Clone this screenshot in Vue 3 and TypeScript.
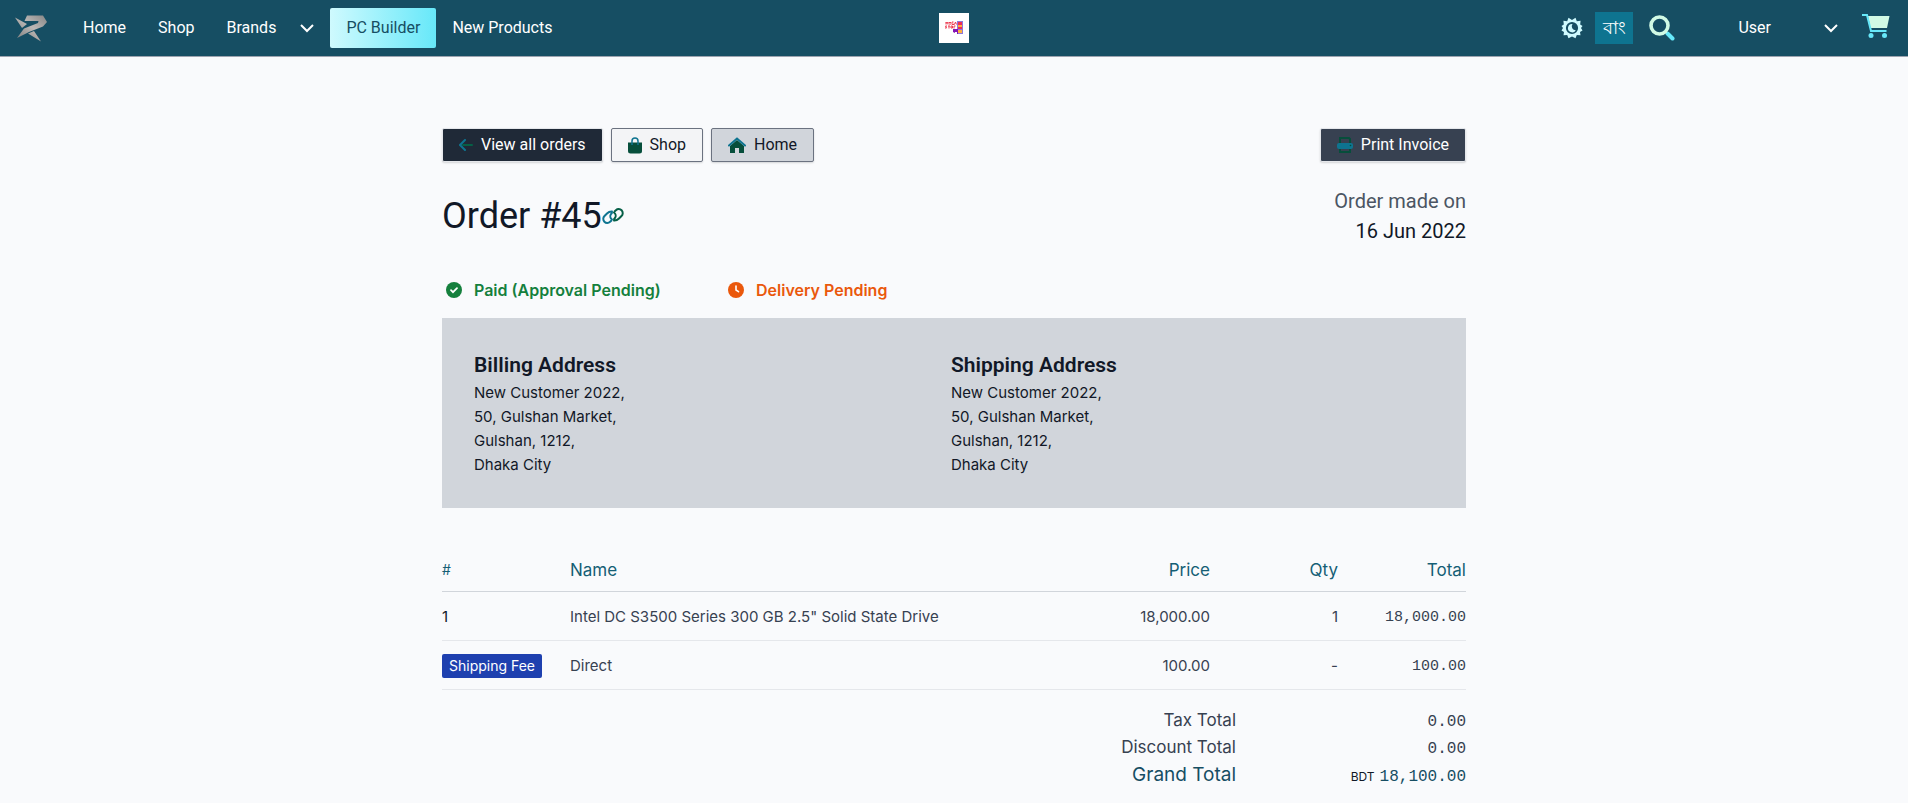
<script setup lang="ts">
interface Address { title: string; lines: string[] }
interface Item { ref: string; badge: boolean; name: string; price: string; qty: string; total: string }

const address = ['New Customer 2022,', '50, Gulshan Market,', 'Gulshan, 1212,', 'Dhaka City']
const addresses: Address[] = [
  { title: 'Billing Address', lines: address },
  { title: 'Shipping Address', lines: address },
]
const items: Item[] = [
  { ref: '1', badge: false, name: 'Intel DC S3500 Series 300 GB 2.5" Solid State Drive', price: '18,000.00', qty: '1', total: '18,000.00' },
  { ref: 'Shipping Fee', badge: true, name: 'Direct', price: '100.00', qty: '-', total: '100.00' },
]
</script>

<template>
  <header class="navbar">
    <nav class="nav-left" aria-label="Main">
      <a href="#" class="brand" aria-label="Homepage">
        <svg width="32" height="27" viewBox="0 0 32 27">
          <defs>
            <linearGradient id="steel" x1="1" y1="0" x2="0" y2="1">
              <stop offset="0" stop-color="#858585" />
              <stop offset=".45" stop-color="#bcb8b6" />
              <stop offset="1" stop-color="#777" />
            </linearGradient>
          </defs>
          <path fill="url(#steel)" d="M12 .5h16l4 6.500-4 4.500-14 5.500-12 6 7-9.500 14-5.500.5-2H9.500zM0 2.500l12 6.500-5 4zM13 18.500l6-2.500 7 10.500z" />
        </svg>
      </a>
      <a href="#" class="nav-link">Home</a>
      <a href="#" class="nav-link">Shop</a>
      <button type="button" class="nav-link dropdown">
        Brands
        <svg class="chevron" width="14" height="9" viewBox="0 0 14 9"><path d="M1 1l6 6 6-6" /></svg>
      </button>
      <a href="#" class="builder">PC Builder</a>
      <a href="#" class="nav-link">New Products</a>
    </nav>

    <a href="#" class="store-logo" aria-label="Mega Store">
      <svg width="30" height="30" viewBox="0 0 30 30">
        <path fill="#fff" d="M0 0h30v30H0z" />
        <path fill="none" stroke="#ec3b50" d="M7 11.500V9l1 1.500L9 9v2.500M10 9.500h2M10 11h2M14.500 9h-1.500v2.500h2v-1M15.500 11.500l1-2.500 1 2.500M8 13H6.500l1 2H6M9 13h2M10 13v2.500M12 13h1.500v2H12zM15 15.500V13h1.500" />
        <path fill="#8d78d8" d="M18 8h6v13h-6z" />
        <path fill="#f02c55" d="M19 9h4v3h-4zM19 14h4v2h-4z" />
        <path fill="#ffb13d" d="M19 12h4v2h-4zM19 17h4v3h-4z" />
        <path fill="#8415b5" d="M14 16h5v5h-1v-2h-2v1l-2-1z" />
      </svg>
    </a>

    <div class="nav-right">
      <button type="button" class="icon-button theme" aria-label="Toggle dark mode">
        <svg width="22" height="22" viewBox="0 0 22 22">
          <path fill="#cffafe" fill-rule="evenodd" d="M11 3L14.500 .7l1.300 3.500 3.800-.4-.4 3.600 2.300 1.600-1.500 2 1.500 2.500-2.500 1.500.5 3.200-3.700-.2-1.300 3.300-3.500-1.800-3.500 1.800-1.300-3.300-3.700.2.500-3.200L.5 13.500 2 11 .5 9l2.300-1.600-.4-3.600 3.800.4L7.500.7zM11 4.900a6.100 6.100 0 100 12.200 6.100 6.100 0 000-12.200z" />
          <path fill="#cffafe" d="M11.500 7a4.200 4.200 0 103.300 6.300A4 4 0 0111.500 7z" />
        </svg>
      </button>
      <button type="button" class="language" lang="bn">বাং</button>
      <button type="button" class="icon-button search" aria-label="Search">
        <svg width="26" height="26" viewBox="0 0 26 26" fill="none">
          <path stroke="#67e8f9" stroke-width="4" stroke-linecap="round" d="M18.500 18.500l5 5" />
          <circle cx="10.500" cy="10.500" r="8.500" stroke="#d1fae5" stroke-width="3.600" />
        </svg>
      </button>
      <button type="button" class="user">
        <span>User</span>
        <svg class="chevron" width="14" height="9" viewBox="0 0 14 9"><path d="M1 1l6 6 6-6" /></svg>
      </button>
      <a href="#" class="cart" aria-label="Cart">
        <svg width="28" height="28" viewBox="0 0 28 28">
          <path fill="#d1fae5" d="M6 2h21.500L25 14H8.500z" />
          <path fill="none" stroke="#67e8f9" stroke-width="2" d="M0 1h5l4 16h15.500" />
          <circle cx="9" cy="21.500" r="2.500" fill="#67e8f9" />
          <circle cx="22.500" cy="21.500" r="2.500" fill="#67e8f9" />
        </svg>
      </a>
    </div>
  </header>

  <main class="order">
    <div class="actions">
      <a href="#" class="button dark">
        <svg width="14" height="12" viewBox="0 0 14 12" fill="none" stroke-width="2" stroke-linecap="round">
          <path stroke="#065f46" d="M4 6h9" /><path stroke="#0e7490" d="M6 1L1 6l5 5" />
        </svg>
        View all orders
      </a>
      <a href="#" class="button light">
        <svg width="14" height="17" viewBox="0 0 14 17">
          <path fill="#064e3b" d="M0 5.500h14V14a2.500 2.500 0 01-2.500 2.500h-9A2.500 2.500 0 010 14z" />
          <path fill="none" stroke="#0e7490" stroke-width="1.500" d="M4 8V4a3 3 0 016 0v4" />
        </svg>
        Shop
      </a>
      <a href="#" class="button gray">
        <svg width="18" height="16" viewBox="0 0 18 16">
          <path fill="#064e3b" d="M9 3l7 6v7h-5v-5H7v5H2V9z" />
          <path fill="none" stroke="#0e7490" stroke-width="2" stroke-linecap="round" d="M1 8.500l8-7 8 7" />
        </svg>
        Home
      </a>
      <button type="button" class="button slate">
        <svg width="16" height="16" viewBox="0 0 16 16">
          <path fill="none" stroke="#064e3b" stroke-width="2" d="M3 8V1h9l1 1v6M3 10v5h10v-5" />
          <rect y="6" width="16" height="6" rx="2" fill="#0e7490" />
          <circle cx="13.500" cy="8.500" r=".8" fill="#064e3b" />
        </svg>
        Print Invoice
      </button>
    </div>

    <div class="heading">
      <h1>Order #45
        <a href="#" aria-label="Link to order">
          <svg width="22" height="18" viewBox="0 0 22 18" fill="none" stroke-width="2" stroke-linecap="round">
            <path stroke="#0e7490" d="M10 4.500C8 4.300 6.500 5 5 6.500L2.500 9a4 4 0 005.600 5.800l1.400-1.300M10 12.500a4 4 0 01-1-5.500l1-1.200" />
            <path stroke="#065f46" d="M12 13.500c2 .2 3.500-.5 5-2L19.500 9a4 4 0 00-5.600-5.800l-1.400 1.300M12 5.500a4 4 0 011 5.500l-1 1.200" />
          </svg>
        </a>
      </h1>
      <p class="date"><span>Order made on</span><time datetime="2022-06-16">16 Jun 2022</time></p>
    </div>

    <div class="statuses">
      <p class="status paid">
        <svg width="16" height="16" viewBox="0 0 16 16" fill="none">
          <circle cx="8" cy="8" r="8" fill="currentColor" /><path stroke="#fff" stroke-width="1.800" stroke-linecap="round" d="M5 8.200l2 2 4-4" />
        </svg>
        Paid (Approval Pending)
      </p>
      <p class="status pending">
        <svg width="16" height="16" viewBox="0 0 16 16" fill="none">
          <circle cx="8" cy="8" r="8" fill="currentColor" /><path stroke="#fff" stroke-width="1.600" stroke-linecap="round" d="M8 4v4l2.500 1.700" />
        </svg>
        Delivery Pending
      </p>
    </div>

    <section class="addresses">
      <address v-for="entry in addresses" :key="entry.title">
        <h2>{{ entry.title }}</h2>
        <p v-for="line in entry.lines" :key="line">{{ line }}</p>
      </address>
    </section>

    <table class="items">
      <colgroup><col class="c-ref" /><col class="c-name" /><col class="c-price" /><col class="c-qty" /><col class="c-total" /></colgroup>
      <thead>
        <tr>
          <th scope="col" class="hash">#</th><th scope="col">Name</th><th scope="col" class="num">Price</th>
          <th scope="col" class="num">Qty</th><th scope="col" class="num">Total</th>
        </tr>
      </thead>
      <tbody>
        <tr v-for="item in items" :key="item.ref">
          <td class="ref"><span :class="{ badge: item.badge }">{{ item.ref }}</span></td>
          <td>{{ item.name }}</td>
          <td class="num">{{ item.price }}</td>
          <td class="num">{{ item.qty }}</td>
          <td class="num"><span class="mono">{{ item.total }}</span></td>
        </tr>
      </tbody>
    </table>

    <dl class="totals">
      <dt>Tax Total</dt><dd>0.00</dd>
      <dt>Discount Total</dt><dd>0.00</dd>
      <dt class="grand">Grand Total</dt><dd class="grand-value"><small>BDT</small><span>18,100.00</span></dd>
    </dl>
  </main>
</template>

<style>
body {
  margin: 0;
  background: #f9fafc;
}
</style>

<style scoped>
* { box-sizing: border-box; }
a { color: inherit; text-decoration: none; }
button { font: inherit; color: inherit; border: 0; background: none; padding: 0; cursor: pointer; }
h1, h2, p, dl, dd { margin: 0; }
svg { display: block; flex: none; }

.navbar {
  display: grid;
  grid-template-columns: 1fr auto 1fr;
  align-items: center;
  height: 57px;
  padding: 0 15px;
  background: #164e63;
  border-bottom: 1px solid #9ca3af;
  color: #fff;
  font: 16px/24px Roboto, sans-serif;
}
.nav-left, .nav-right { display: flex; align-items: center; }
.nav-right { justify-content: flex-end; }
.brand { margin-right: 20px; }
.nav-link { padding: 8px 16px; }
.dropdown { display: flex; align-items: center; gap: 24px; }
.chevron { fill: none; stroke: #fff; stroke-width: 2; }
.builder {
  padding: 8px 16px;
  border-radius: 2px;
  background: linear-gradient(to right, #cffafe, #67e8f9);
  color: #164e63;
}
.language {
  width: 38px;
  height: 32px;
  margin: 0 16px 0 12px;
  background: #0e7490;
  text-align: center;
  font-size: 18px;
}
.search { margin-right: 63px; }
.user { display: flex; align-items: center; gap: 53px; margin-right: 24px; }
.cart { margin-right: 3px; }

.order {
  max-width: 1024px;
  margin: 0 auto;
  padding: 71px 0 16px;
  color: #111827;
  font: 15px/24px Inter, sans-serif;
}
.actions { display: flex; gap: 8px; }
.button {
  display: flex;
  align-items: center;
  gap: 8px;
  height: 34px;
  padding: 0 16px;
  border: 1px solid #6b7280;
  border-radius: 2px;
  box-shadow: 0 1px 2px rgba(0, 0, 0, .15);
  font: 16px/24px Roboto, sans-serif;
}
.dark { background: #1f2937; border-color: #e5e7eb; color: #fff; }
.light { background: #f3f4f6; }
.gray { background: #d1d5db; }
.slate { margin-left: auto; background: #374151; border-color: #e5e7eb; color: #fff; }

.heading {
  display: flex;
  justify-content: space-between;
  align-items: center;
  margin-top: 24px;
  font-family: Roboto, sans-serif;
}
h1 { display: flex; align-items: center; font-size: 36px; line-height: 40px; font-weight: 400; }
.date { display: grid; text-align: right; font-size: 20px; line-height: 30px; }
.date span { color: #4b5563; }

.statuses { display: grid; grid-template-columns: 282px 1fr; margin: 32px 0 16px; }
.status { display: flex; align-items: center; gap: 12px; padding-left: 4px; font-size: 16px; font-weight: 600; }
.paid { color: #15803d; }
.pending { color: #ea580c; }

.addresses {
  display: grid;
  grid-template-columns: 1fr 1fr;
  padding: 32px 38px 31px 32px;
  background: #d1d5db;
}
address { font-style: normal; }
h2 { margin-bottom: 1px; font: 600 21px/30px Roboto, sans-serif; }

.items { width: 100%; margin-top: 48px; border-collapse: collapse; table-layout: fixed; color: #374151; }
.c-ref, .c-qty, .c-total { width: 12.5%; }
.c-name { width: 37.5%; }
th { height: 35px; padding: 0 0 7px; text-align: left; font-size: 17px; line-height: 28px; font-weight: 400; color: #155e75; border-bottom: 1px solid #d1d5db; }
td { height: 49px; padding: 2px 0 0; white-space: nowrap; border-bottom: 1px solid #e5e7eb; }
.hash { font-size: 14px; }
.ref { color: #111827; }
.num { text-align: right; }
.mono { font-family: "Liberation Mono", monospace; }
.badge {
  display: inline-block;
  padding: 0 7px;
  border-radius: 2px;
  background: #1e40af;
  color: #fff;
  font-size: 14px;
}

.totals {
  display: grid;
  grid-template-columns: 1fr 230px;
  grid-auto-rows: 27px;
  align-items: baseline;
  margin-top: 17px;
  line-height: 27px;
  text-align: right;
  font-size: 17px;
  color: #374151;
}
.totals dd { font-family: "Liberation Mono", monospace; font-size: 16px; }
.totals .grand { font-size: 19px; color: #164e63; }
.totals .grand-value {
  display: flex;
  justify-content: flex-end;
  align-items: baseline;
  gap: 5px;
  color: #164e63;
}
small { font: 12px/16px Inter, sans-serif; color: #111827; }
</style>
